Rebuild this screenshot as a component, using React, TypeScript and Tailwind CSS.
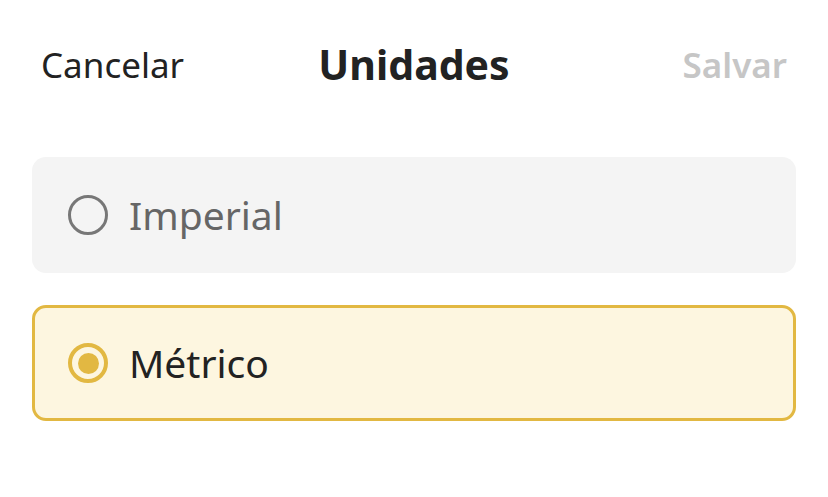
import React from "react";

export default function App() {
  const font = { fontFamily: '"Noto Sans", "Open Sans", sans-serif' };
  return (
    <div className="w-[828px] h-[497px] bg-white" style={font}>
      <div className="flex items-center justify-between pl-[41px] pr-[41px] pt-[40px] h-[90px]">
        <span className="text-[35px] text-[#222] w-[200px]">Cancelar</span>
        <span className="text-[41px] font-bold text-[#222]">Unidades</span>
        <span className="text-[35px] font-semibold text-[#c6c6c6] w-[200px] text-right">Salvar</span>
      </div>
      <div className="flex flex-col gap-[32px] px-[32px] pt-[67px]">
        <div className="h-[116px] rounded-[14px] bg-[#f4f4f4] flex items-center pl-[36px] gap-[21px]">
          <div className="w-[40px] h-[40px] rounded-full border-[3.5px] border-[#777]" />
          <span className="text-[39px] text-[#666]">Imperial</span>
        </div>
        <div className="h-[116px] rounded-[14px] bg-[#fdf6e0] border-[3px] border-[#e2b842] flex items-center pl-[33px] gap-[21px]">
          <div className="w-[40px] h-[40px] rounded-full border-4 border-[#e2b842] flex items-center justify-center">
            <div className="w-[21px] h-[21px] rounded-full bg-[#e2b842]" />
          </div>
          <span className="text-[39px] text-[#222]">Métrico</span>
        </div>
      </div>
    </div>
  );
}
